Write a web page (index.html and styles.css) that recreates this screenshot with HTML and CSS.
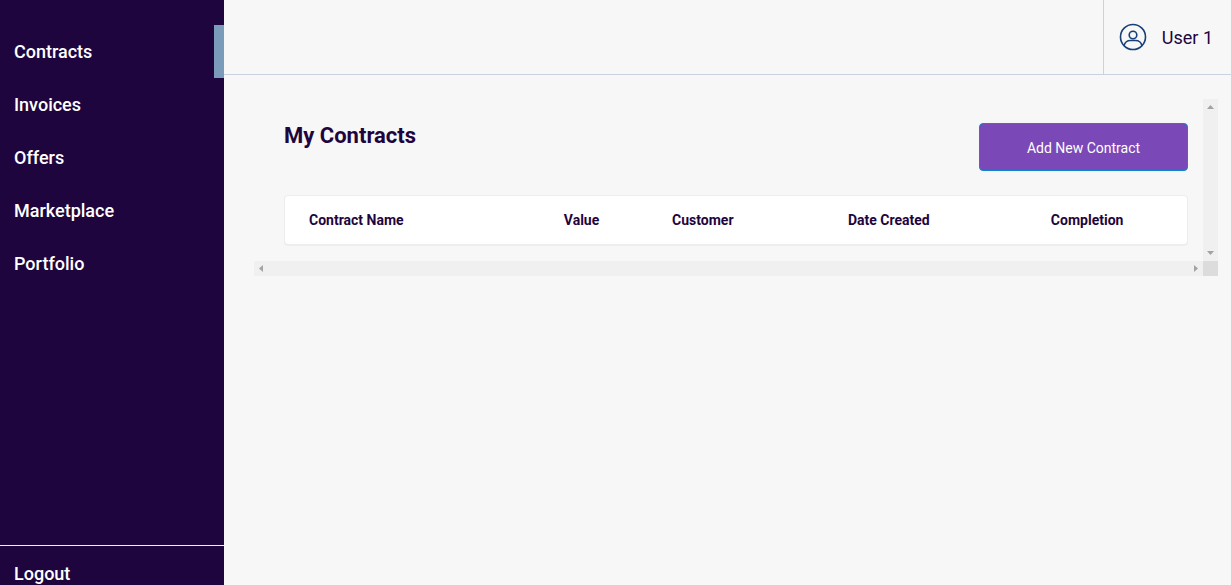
FILE: index.html
```html
<!DOCTYPE html>
<html lang="en">
<head>
<meta charset="utf-8">
<title>My Contracts</title>
<link rel="stylesheet" href="styles.css">
</head>
<body>
<div class="app">
  <aside class="sidebar">
    <nav class="nav">
      <a class="nav-link active" href="#contracts" aria-current="page">Contracts</a>
      <a class="nav-link" href="#invoices">Invoices</a>
      <a class="nav-link" href="#offers">Offers</a>
      <a class="nav-link" href="#marketplace">Marketplace</a>
      <a class="nav-link" href="#portfolio">Portfolio</a>
    </nav>
    <a class="logout" href="#logout">Logout</a>
  </aside>
  <div class="page">
    <header class="topbar">
      <div class="user">
        <svg class="avatar" viewBox="0 0 28 28" fill="none" stroke="#17407a" stroke-width="1.6" aria-hidden="true">
          <circle cx="14" cy="14" r="12.5"/>
          <circle cx="14" cy="12" r="3.8"/>
          <path d="M5 22.500C6 19 8.500 17.500 11.500 17.500H16.500C19.500 17.500 22 19 23 22.500"/>
        </svg>
        <span>User 1</span>
      </div>
    </header>
    <main class="scroller">
      <section class="content">
        <div class="heading">
          <h1 class="title">My Contracts</h1>
          <button class="add" type="button">Add New Contract</button>
        </div>
        <div class="card">
          <table class="table">
            <thead>
              <tr>
                <th class="col-name" scope="col">Contract Name</th>
                <th class="col-value" scope="col">Value</th>
                <th class="col-customer" scope="col">Customer</th>
                <th class="col-date" scope="col">Date Created</th>
                <th scope="col">Completion</th>
              </tr>
            </thead>
          </table>
        </div>
      </section>
      <div class="bar vertical" aria-hidden="true">
        <svg class="arrow" viewBox="0 0 15 15"><path d="M4 10h7L7.500 6z"/></svg>
        <svg class="arrow" viewBox="0 0 15 15"><path d="M4 5h7L7.500 9z"/></svg>
      </div>
      <div class="bar" aria-hidden="true">
        <svg class="arrow" viewBox="0 0 15 15"><path d="M9 4v7L5 7.500z"/></svg>
        <svg class="arrow" viewBox="0 0 15 15"><path d="M6 4v7L10 7.500z"/></svg>
      </div>
      <div class="corner"></div>
    </main>
  </div>
</div>
</body>
</html>
```
FILE: styles.css
```css
* {
  box-sizing: border-box;
}

body {
  margin: 0;
  background: #f7f7f7;
  color: #1f053d;
  font-family: Roboto, "Liberation Sans", sans-serif;
}

.app {
  display: flex;
  min-height: 100vh;
}

.sidebar {
  display: flex;
  flex: 0 0 224px;
  flex-direction: column;
  justify-content: space-between;
  padding-top: 25px;
  background: #1f053d;
}

.nav {
  display: flex;
  flex-direction: column;
}

.nav-link,
.logout {
  color: #fff;
  font-size: 18px;
  font-weight: 500;
  text-decoration: none;
}

.nav-link {
  padding-left: 14px;
  line-height: 53px;
}

.active {
  border-right: 10px solid #7b9bba;
}

.logout {
  padding: 16px 14px 0;
  border-top: 1px solid #f5e9ff;
  line-height: 23px;
}

.page {
  flex: 1;
  min-width: 0;
}

.topbar {
  display: flex;
  justify-content: flex-end;
  height: 75px;
  border-bottom: 1px solid #c8d3e0;
}

.user {
  display: flex;
  align-items: center;
  gap: 15px;
  padding: 0 18px 0 15px;
  border-left: 1px solid #c8d3e0;
  font-size: 18px;
}

.avatar {
  width: 28px;
  height: 28px;
}

.scroller {
  display: grid;
  grid-template-columns: 1fr 15px;
  margin: 24px 13px 0 30px;
}

.content {
  padding: 24px 15px 16px 30px;
}

.heading {
  display: flex;
  align-items: flex-start;
  justify-content: space-between;
  margin-bottom: 24px;
}

.title {
  margin: 0;
  font-size: 22px;
  font-weight: 700;
  line-height: 25px;
}

.add {
  width: 209px;
  height: 48px;
  padding: 2px 0 0;
  border: 1px solid #0d86cc;
  border-radius: 4px;
  background: #7b48b7;
  color: #fff;
  font-family: inherit;
  font-size: 14px;
}

.card {
  border: 1px solid #ededed;
  border-radius: 4px;
  background: #fff;
  box-shadow: 0 1px 0 #eee;
}

.table {
  width: 100%;
  border-collapse: collapse;
  table-layout: fixed;
}

.table th {
  padding: 0 0 0 24px;
  font-size: 14px;
  font-weight: 700;
  line-height: 48px;
  text-align: left;
}

.col-name {
  width: 28.25%;
}

.col-value {
  width: 12%;
}

.col-customer {
  width: 19.5%;
}

.col-date {
  width: 22.5%;
}

.bar {
  display: flex;
  justify-content: space-between;
  background: #f0f0f0;
}

.vertical {
  flex-direction: column;
}

.arrow {
  width: 15px;
  height: 15px;
  fill: #a3a3a3;
}

.corner {
  height: 15px;
  background: #dcdcdc;
}
```
